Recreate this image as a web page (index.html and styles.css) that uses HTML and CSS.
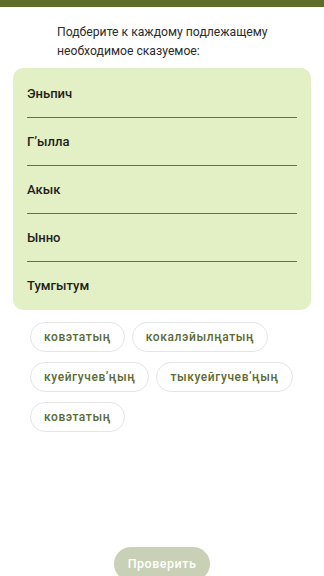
FILE: index.html
```html
<!DOCTYPE html>
<html lang="ru">
<head>
    <meta charset="UTF-8">
    <meta name="viewport" content="width=device-width, initial-scale=1.0">
    <title>Упражнение</title>
    <link rel="stylesheet" href="styles.css">
</head>
<body>
    <div class="top-bar"></div>
    <p class="task">Подберите к каждому подлежащему необходимое сказуемое:</p>

    <div class="card">
        <div class="row">Эньпич</div>
        <div class="row">Г’ылла</div>
        <div class="row">Акык</div>
        <div class="row">Ынно</div>
        <div class="row last">Тумгытум</div>
    </div>

    <div class="chips">
        <span class="chip">ковэтатың</span>
        <span class="chip">кокалэйылңатың</span>
        <span class="chip">куейгучев’ңың</span>
        <span class="chip">тыкуейгучев’ңың</span>
        <span class="chip">ковэтатың</span>
    </div>

    <div class="check-wrap">
        <button class="check-btn">Проверить</button>
    </div>
</body>
</html>
```

FILE: styles.css
```css
body {
    margin: 0;
    background: #fff;
    font-family: Roboto, 'Noto Sans', sans-serif;
    color: #222;
    overflow: hidden;
}
.top-bar {
    height: 7px;
    background-color: #5d6b2b;
}
.task {
    margin: 0;
    padding: 16px 40px 7px 57px;
    font-size: 12.2px;
    line-height: 19px;
    color: #2b2b2b;
}
.card {
    margin: 0 13px;
    padding: 2px 14px 0;
    background-color: #e3efc4;
    border-radius: 10px;
}
.row {
    padding: 13.5px 0 14.5px;
    font-size: 13px;
    font-weight: 500;
    line-height: 19px;
    color: #1e1e1e;
    border-bottom: 1.5px solid #66733d;
}
.row.last {
    border-bottom: none;
    padding-bottom: 15px;
}
.chips {
    display: flex;
    flex-wrap: wrap;
    gap: 10px 7px;
    padding: 12px 20px 0 30px;
}
.chip {
    height: 28px;
    line-height: 28px;
    padding: 0 13px;
    border: 1px solid #e4e4e4;
    border-radius: 15px;
    font-size: 12px;
    font-weight: 500;
    letter-spacing: 0.6px;
    color: #5b6a34;
    background: #fff;
}
.check-wrap {
    text-align: center;
    margin-top: 115px;
}
.check-btn {
    padding: 0 14px;
    height: 34px;
    border: none;
    border-radius: 17px;
    background-color: #c8d0b6;
    color: #fff;
    font-family: Roboto, sans-serif;
    font-size: 12.5px;
    font-weight: 500;
    letter-spacing: 0.5px;
    cursor: pointer;
}
```
